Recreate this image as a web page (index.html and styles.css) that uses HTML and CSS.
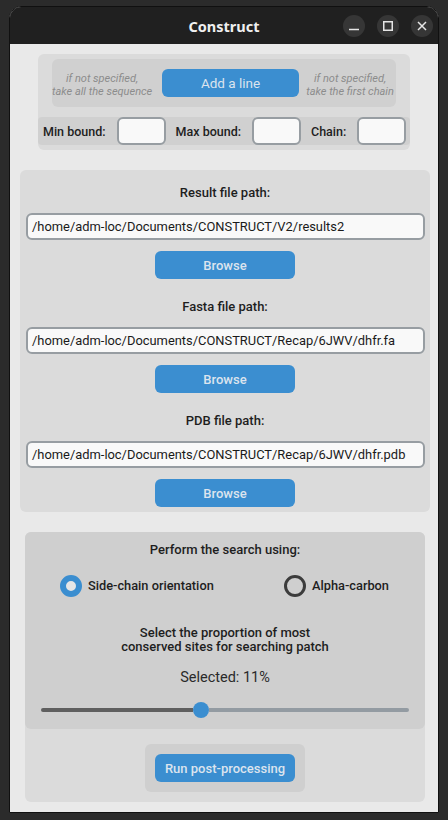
FILE: index.html
```html
<!DOCTYPE html>
<html>
<head>
<meta charset="utf-8">
<title>Construct</title>
<link rel="stylesheet" href="styles.css">
</head>
<body>
<div class="window">
  <div class="titlebar">
    <div class="tb-side"></div>
    <div class="tb-title">Construct</div>
    <div class="tb-side tb-controls">
      <span class="ctl"><svg width="22" height="22" viewBox="0 0 22 22"><line x1="6" y1="14.5" x2="16" y2="14.5" stroke="#e6e6e6" stroke-width="1.5"/></svg></span>
      <span class="ctl"><svg width="22" height="22" viewBox="0 0 22 22"><rect x="6.75" y="6.75" width="8.5" height="8.5" fill="none" stroke="#e6e6e6" stroke-width="1.5"/></svg></span>
      <span class="ctl"><svg width="22" height="22" viewBox="0 0 22 22"><path d="M7 7 L15 15 M15 7 L7 15" stroke="#e6e6e6" stroke-width="1.5"/></svg></span>
    </div>
  </div>
  <div class="content">
    <div class="bounds">
      <div class="hint-box">
        <div class="hint hint-left">if not specified,<br>take all the sequence</div>
        <div class="btn btn-add">Add a line</div>
        <div class="hint hint-right">if not specified,<br>take the first chain</div>
      </div>
      <div class="bound-row">
        <span class="lbl lbl-first">Min bound:</span>
        <span class="entry small"></span>
        <span class="lbl">Max bound:</span>
        <span class="entry small"></span>
        <span class="lbl">Chain:</span>
        <span class="entry small"></span>
      </div>
    </div>

    <div class="paths">
      <div class="path-group">
        <div class="plabel">Result file path:</div>
        <div class="entry wide">/home/adm-loc/Documents/CONSTRUCT/V2/results2</div>
        <div class="btn btn-browse">Browse</div>
      </div>
      <div class="path-group">
        <div class="plabel">Fasta file path:</div>
        <div class="entry wide">/home/adm-loc/Documents/CONSTRUCT/Recap/6JWV/dhfr.fa</div>
        <div class="btn btn-browse">Browse</div>
      </div>
      <div class="path-group">
        <div class="plabel">PDB file path:</div>
        <div class="entry wide">/home/adm-loc/Documents/CONSTRUCT/Recap/6JWV/dhfr.pdb</div>
        <div class="btn btn-browse">Browse</div>
      </div>
    </div>

    <div class="search">
      <div class="search-inner">
        <div class="slabel">Perform the search using:</div>
        <div class="radio-row">
          <div class="radio-item radio-left">
            <span class="radio on"></span>
            <span class="rtext">Side-chain orientation</span>
          </div>
          <div class="radio-item">
            <span class="radio off"></span>
            <span class="rtext">Alpha-carbon</span>
          </div>
        </div>
        <div class="slabel prop">Select the proportion of most<br>conserved sites for searching patch</div>
        <div class="selected">Selected: 11%</div>
        <div class="slider">
          <div class="track-left"></div>
          <div class="thumb"></div>
          <div class="track-right"></div>
        </div>
      </div>
      <div class="run-wrap">
        <div class="run-frame">
          <div class="btn btn-run">Run post-processing</div>
        </div>
      </div>
    </div>
  </div>
</div>
</body>
</html>
```

FILE: styles.css
```css
* { box-sizing: border-box; }
html, body { margin: 0; padding: 0; }
body {
  background: #2b2b2b;
  width: 448px;
  height: 820px;
  overflow: hidden;
  font-family: Roboto, "Liberation Sans", sans-serif;
  color: #1e1e1e;
}
.window {
  margin: 6px 0 0 9px;
  width: 430px;
  height: 807px;
  border: 1px solid #101010;
  border-radius: 12px 12px 0 0;
  overflow: hidden;
  background: #e9e9e9;
  display: flex;
  flex-direction: column;
}
.titlebar {
  height: 37px;
  flex: none;
  background: #202020;
  display: grid;
  grid-template-columns: 1fr auto 1fr;
  align-items: center;
}
.tb-title {
  color: #f0f0f0;
  font-family: "Noto Sans", "Open Sans", sans-serif;
  font-weight: 700;
  font-size: 14.5px;
  padding-top: 1px;
}
.tb-controls {
  display: flex;
  justify-content: flex-end;
  gap: 12px;
  padding-right: 5px;
  padding-top: 1px;
}
.ctl {
  width: 22px;
  height: 22px;
  border-radius: 50%;
  background: #363636;
  display: block;
}
.ctl svg { display: block; }
.content {
  flex: 1;
  display: flex;
  flex-direction: column;
  align-items: flex-start;
}

/* section 1 */
.bounds {
  margin: 10px 0 0 28px;
  width: 372px;
  height: 96px;
  background: #dbdbdb;
  border-radius: 6px;
  display: flex;
  flex-direction: column;
  align-items: flex-start;
}
.hint-box {
  margin: 5px 0 0 14px;
  width: 344px;
  height: 48px;
  background: #d0d0d0;
  border-radius: 6px;
  display: flex;
  align-items: center;
}
.hint {
  font-style: italic;
  font-size: 11px;
  line-height: 13px;
  color: #8c8c8c;
  text-align: center;
  white-space: nowrap;
  padding-top: 3px;
}
.hint-left { width: 100px; }
.hint-right { width: 94px; }
.btn {
  background: #3b8ed0;
  color: #dce4ee;
  border-radius: 6px;
  font-size: 13px;
  font-weight: 500;
  display: flex;
  align-items: center;
  justify-content: center;
}
.btn-add {
  margin: 0 5px 0 10px;
  width: 140px;
  height: 28px;
  font-weight: 400;
  font-size: 13.5px;
}
.bound-row {
  margin-top: 10px;
  width: 372px;
  height: 28px;
  background: #d0d0d0;
  border-radius: 4px;
  display: flex;
  align-items: center;
}
.lbl {
  font-size: 12.5px;
  font-weight: 500;
  margin-left: 10px;
  margin-right: 11px;
  white-space: nowrap;
}
.lbl-first { margin-left: 5px; }
.entry {
  background: #f9f9f9;
  border: 2px solid #979da2;
  border-radius: 6px;
  display: block;
}
.entry.small {
  width: 49px;
  height: 28px;
}

/* section 2 */
.paths {
  margin: 20px 0 0 10px;
  width: 410px;
  height: 342px;
  background: #dbdbdb;
  border-radius: 6px;
  padding-top: 13px;
  display: flex;
  flex-direction: column;
  gap: 18px;
}
.path-group {
  display: flex;
  flex-direction: column;
  align-items: center;
}
.plabel {
  height: 20px;
  line-height: 20px;
  font-size: 13px;
  font-weight: 500;
}
.entry.wide {
  margin-top: 10px;
  width: 399px;
  height: 27px;
  align-self: flex-start;
  margin-left: 6px;
  font-size: 12.9px;
  line-height: 23px;
  padding-left: 4px;
  color: #1a1a1a;
  white-space: nowrap;
  overflow: hidden;
}
.btn-browse {
  margin-top: 11px;
  width: 140px;
  height: 28px;
}

/* section 3 */
.search {
  margin: 20px 0 0 15px;
  width: 400px;
  height: 270px;
  background: #dbdbdb;
  border-radius: 6px;
  display: flex;
  flex-direction: column;
}
.search-inner {
  height: 197px;
  background: #cfcfcf;
  border-radius: 6px;
  padding-top: 8px;
  display: flex;
  flex-direction: column;
  align-items: center;
}
.slabel {
  font-size: 13px;
  font-weight: 500;
  line-height: 20px;
  text-align: center;
}
.slabel.prop {
  margin-top: 29px;
  line-height: 14px;
}
.radio-row {
  margin-top: 14px;
  width: 100%;
  display: flex;
  align-items: center;
  height: 23px;
  padding-left: 35px;
}
.radio-item {
  display: flex;
  align-items: center;
}
.radio-left { width: 224px; }
.radio {
  width: 22px;
  height: 22px;
  border-radius: 50%;
  display: block;
  margin-right: 6px;
  flex: none;
}
.radio.on {
  border: 6px solid #3b8ed0;
  background: #e6e6e6;
}
.radio.off {
  border: 3px solid #3c3c3c;
}
.rtext {
  font-size: 12.8px;
  font-weight: 500;
  white-space: nowrap;
}
.selected {
  margin-top: 14px;
  font-size: 14.5px;
  line-height: 20px;
  color: #2a2a2a;
}
.slider {
  margin-top: 14px;
  width: 368px;
  height: 16px;
  display: flex;
  align-items: center;
}
.track-left {
  width: 152px;
  height: 4px;
  background: #5f5f5f;
  border-radius: 2px 0 0 2px;
}
.thumb {
  width: 16px;
  height: 16px;
  border-radius: 50%;
  background: #3b8ed0;
  flex: none;
}
.track-right {
  flex: 1;
  height: 4px;
  background: #939ba2;
  border-radius: 0 2px 2px 0;
}
.run-wrap {
  padding-top: 15px;
  display: flex;
  justify-content: center;
}
.run-frame {
  width: 160px;
  height: 48px;
  background: #cfcfcf;
  border-radius: 6px;
  display: flex;
  align-items: center;
  justify-content: center;
}
.btn-run {
  width: 140px;
  height: 28px;
}
```
